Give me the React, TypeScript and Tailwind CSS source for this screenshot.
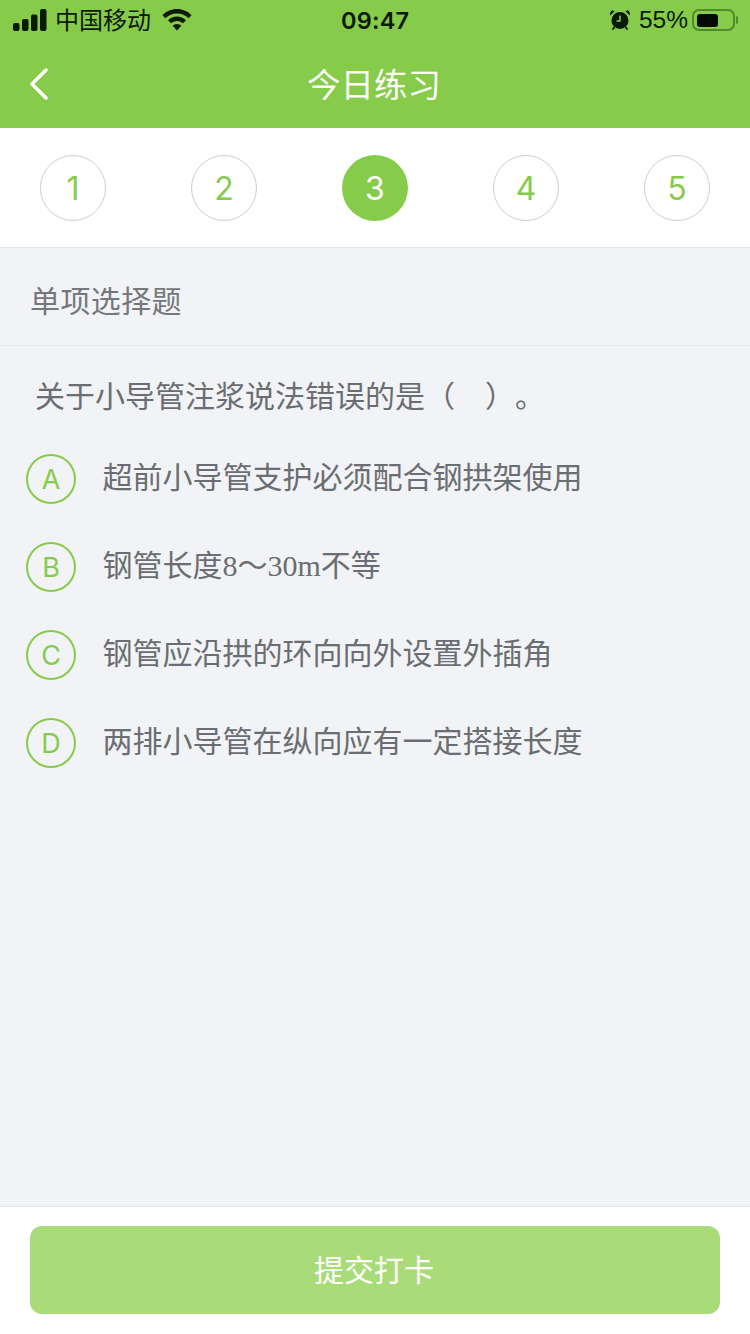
const sans = "font-['Liberation_Sans','Noto_Sans_CJK_SC',sans-serif]";
const thin = "font-['Inter','Liberation_Sans',sans-serif] font-normal";

const steps = [1, 2, 3, 4, 5];
const activeStep = 3;

const options = [
  { key: "A", text: "超前小导管支护必须配合钢拱架使用" },
  {
    key: "B",
    text: (
      <>
        钢管长度
        <span className="font-['Liberation_Serif','Noto_Sans_CJK_SC',serif]">8～30m</span>
        不等
      </>
    ),
  },
  { key: "C", text: "钢管应沿拱的环向向外设置外插角" },
  { key: "D", text: "两排小导管在纵向应有一定搭接长度" },
];

function StatusBar() {
  return (
    <div className="relative flex h-10 items-center justify-between pl-[13px] pr-[11px] text-[#0a1a05]">
      <div className="flex items-center">
        <svg width="34" height="22" viewBox="0 0 34 22" fill="currentColor">
          <rect x="0" y="14" width="6.500" height="8" rx="2" />
          <rect x="9" y="10" width="6.500" height="12" rx="2" />
          <rect x="18" y="5.500" width="6.500" height="16.500" rx="2" />
          <rect x="27" y="0" width="6.500" height="22" rx="2" />
        </svg>
        <span className="relative top-[1px] ml-[8px] text-[24px] leading-none">中国移动</span>
        <svg className="ml-[11px]" width="30" height="22" viewBox="0 0 30 22" fill="currentColor">
          <path d="M15 0C9.300 0 4.200 2.300 .5 6.200l3 3C6.400 6.200 10.400 4.400 15 4.400s8.600 1.800 11.500 4.800l3-3C25.800 2.300 20.700 0 15 0z" />
          <path d="M15 7.600c-3.500 0-6.700 1.400-9 3.700l3 3c1.500-1.500 3.600-2.400 6-2.400s4.500.9 6 2.400l3-3c-2.300-2.300-5.500-3.700-9-3.700z" />
          <path d="M15 15c-1.700 0-3.200.7-4.300 1.800L15 21.500l4.300-4.700C18.200 15.700 16.700 15 15 15z" />
        </svg>
      </div>
      <span className="absolute left-[341px] top-[7px] font-['Inter','Liberation_Sans',sans-serif] text-[23.500px] font-semibold leading-[28px] tracking-[0.2px]">
        09:47
      </span>
      <div className="flex items-center">
        <svg className="-ml-[2px]" width="22" height="22" viewBox="0 0 22 22" fill="currentColor">
          <path d="M1 6.500 5.500 2.500 3.500 1.200C2 1.400 .8 3.500 1 6.500zM21 6.500 16.500 2.500 18.500 1.200C20 1.400 21.200 3.500 21 6.500z" />
          <circle cx="11" cy="11.500" r="8.500" />
          <path d="M4.500 17.500 2.800 20.200 4 21 6.200 19zM17.500 17.500l1.700 2.700-1.200.8-2.200-2z" />
          <path d="M11 6.500v5.500H7.500" fill="none" stroke="#87cb4a" strokeWidth="1.500" />
        </svg>
        <span className="ml-[8px] text-[24.500px] leading-none">55%</span>
        <div className="ml-[4px] h-[22px] w-[43px] rounded-[7px] border-2 border-[#4f8a2c] p-[2.500px]">
          <div className="h-full w-[21px] rounded-[3px] bg-[#050a02]" />
        </div>
        <div className="ml-[1px] mr-[1px] h-[8px] w-[2px] rounded-r-full bg-[#4f8a2c]" />
      </div>
    </div>
  );
}

function Header() {
  return (
    <header className="h-32 shrink-0 bg-[#87cb4a]">
      <StatusBar />
      <div className="relative flex h-[88px] items-center justify-center pt-[4px]">
        <svg
          className="absolute left-[29px] top-[28px]"
          width="20"
          height="32"
          viewBox="0 0 20 32"
          fill="none"
          stroke="white"
          strokeWidth="3.500"
          strokeLinecap="round"
          strokeLinejoin="round"
        >
          <path d="M17 2 3 16l14 14" />
        </svg>
        <h1 className="pr-[2px] text-[33.500px] font-normal leading-none text-white">今日练习</h1>
      </div>
    </header>
  );
}

function StepNav() {
  return (
    <nav className={`flex h-[120px] shrink-0 items-start justify-between border-b border-[#e6e7ea] bg-white px-10 pt-[27px] ${thin}`}>
      {steps.map((step) =>
        step === activeStep ? (
          <div
            key={step}
            className="flex h-[66px] w-[66px] items-center justify-center rounded-full bg-[#87cb4a] pt-[2px] text-[32px] text-white"
          >
            {step}
          </div>
        ) : (
          <div
            key={step}
            className="flex h-[66px] w-[66px] items-center justify-center rounded-full border border-[#cfcfcf] pt-[2px] text-[32px] text-[#87cb4a]"
          >
            {step}
          </div>
        ),
      )}
    </nav>
  );
}

function OptionRow({ optionKey, children }: { optionKey: string; children: React.ReactNode }) {
  return (
    <div className="flex h-[88px] items-center pl-[26px]">
      <div className={`flex h-[50px] w-[50px] items-center justify-center rounded-full border-2 border-[#87cb4a] text-[27px] leading-none text-[#87cb4a] ${thin}`}>
        {optionKey}
      </div>
      <p className="mb-[2px] ml-[26.500px] text-[30px] leading-none text-[#6a6d71]">{children}</p>
    </div>
  );
}

export default function App() {
  return (
    <div className={`flex h-[1334px] w-[750px] flex-col overflow-hidden bg-[#f2f3f6] ${sans}`}>
      <Header />
      <StepNav />
      <main className="flex-1">
        <div className="flex h-[98px] items-center border-b border-[#e6e7ea] pl-[30px] pt-[10px] text-[30px] leading-none tracking-[0.4px] text-[#75787b]">
          单项选择题
        </div>
        <p className="mb-[23px] mt-[36px] pl-[35px] text-[30px] leading-none text-[#6a6d71]">
          关于小导管注浆说法错误的是（　）<span className="ml-[15px]">。</span>
        </p>
        <div>
          {options.map((option) => (
            <OptionRow key={option.key} optionKey={option.key}>
              {option.text}
            </OptionRow>
          ))}
        </div>
      </main>
      <footer className="h-[128px] shrink-0 border-t border-[#e8e9ec] bg-white px-[30px] pt-[19px]">
        <button className="flex h-[88px] w-full items-center justify-center rounded-xl bg-[#a9dc79] pr-[2px] text-[30px] text-white">
          提交打卡
        </button>
      </footer>
    </div>
  );
}
